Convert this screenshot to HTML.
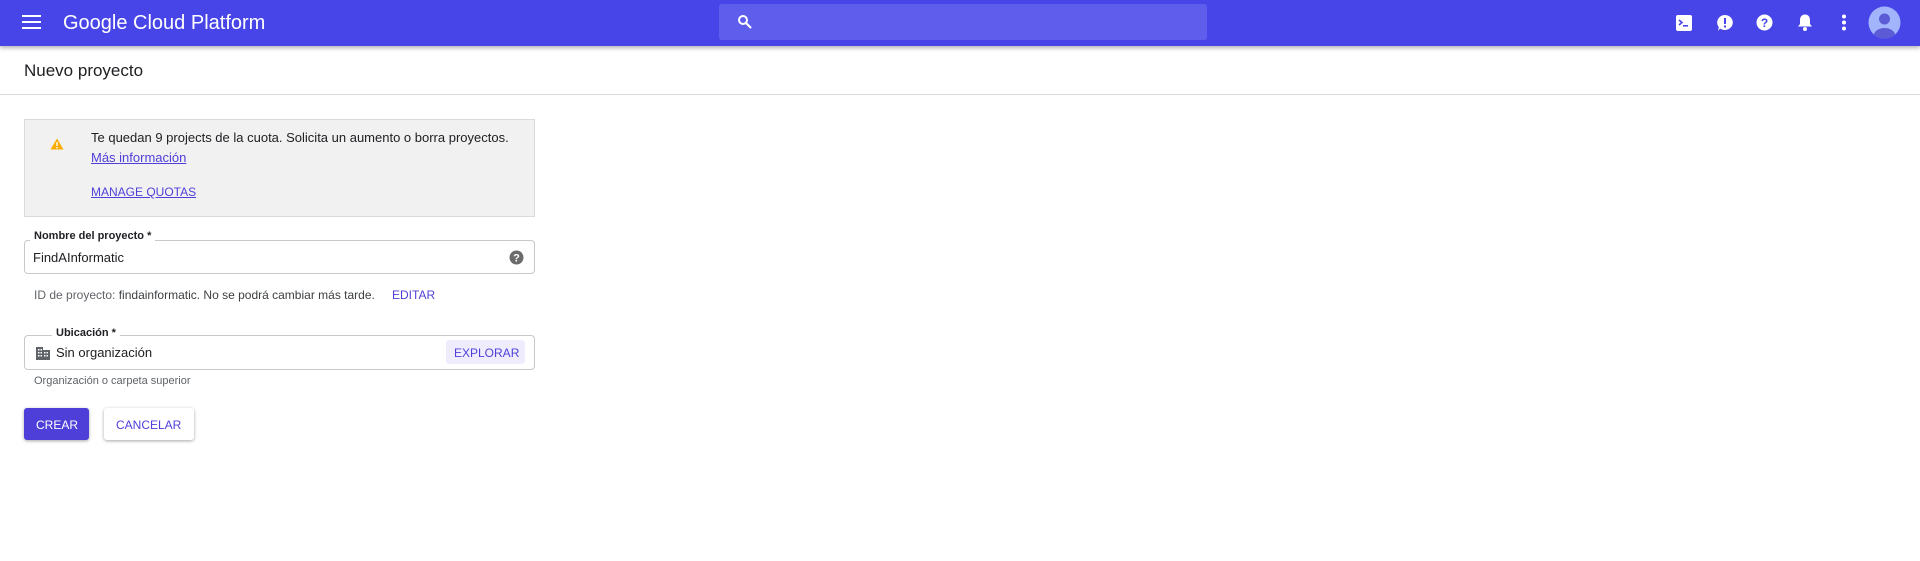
<!DOCTYPE html>
<html><head><meta charset="utf-8"><style>
*{box-sizing:border-box;margin:0;padding:0}
body{width:1920px;height:561px;background:#fff;font-family:"Liberation Sans",Arial,sans-serif;position:relative;overflow:hidden;color:#202124}
.top{position:absolute;left:0;top:0;width:1920px;height:46px;background:#4845e8;box-shadow:0 2px 4px rgba(0,0,0,.3);z-index:2}
.abs{position:absolute}
.search{left:719px;top:4px;width:488px;height:36px;background:#5f5eec;border-radius:3px}
.t{position:absolute;white-space:nowrap;font-size:13px}
.box{left:24px;top:119px;width:511px;height:98px;background:#f1f1f1;border:1px solid #dadada}
.field{border:1px solid #c8c8c8;border-radius:4px;left:24px;width:511px}
.lbl{background:#fff;padding:0 4px;font-size:11px;font-weight:bold;color:#202124}
a{color:#4f3fd9}
</style></head><body>
<div class="top">
 <svg class="abs" style="left:22px;top:14px" width="20" height="16"><rect y="1" width="19" height="2" fill="#fff"/><rect y="7" width="19" height="2" fill="#fff"/><rect y="13" width="19" height="2" fill="#fff"/></svg>
 <div class="t" style="left:63px;top:12px;font-size:20px;color:#fff">Google Cloud Platform</div>
 <div class="abs search"><svg class="abs" style="left:18px;top:10px" width="16" height="16" viewBox="0 0 16 16"><circle cx="6" cy="6" r="4" stroke="#fff" stroke-width="2" fill="none"/><path d="M9 9l5 5" stroke="#fff" stroke-width="2.2"/></svg></div>
 <svg class="abs" style="left:1676px;top:15px" width="16" height="16"><rect width="16" height="16" rx="2" fill="#fff"/><path d="M3 5l3 2.5L3 10" stroke="#4845e8" stroke-width="1.6" fill="none"/><rect x="7" y="10" width="5" height="1.6" fill="#4845e8"/></svg>
 <svg class="abs" style="left:1716px;top:14px" width="18" height="18"><path d="M9 1a8 7.5 0 1 1-5 13.5L2 17l.8-4A8 7.5 0 0 1 9 1z" fill="#fff"/><rect x="8" y="4" width="2" height="6" fill="#4845e8"/><rect x="8" y="11.5" width="2" height="2" fill="#4845e8"/></svg>
 <svg class="abs" style="left:1756px;top:14px" width="17" height="17"><circle cx="8.5" cy="8.5" r="8" fill="#fff"/><text x="8.5" y="13" text-anchor="middle" font-size="12" font-weight="bold" fill="#4845e8" font-family="Liberation Sans">?</text></svg>
 <svg class="abs" style="left:1797px;top:13px" width="16" height="19"><path d="M8 1.5c3 0 5 2.3 5 5.5v4l2 2.5H1l2-2.5v-4c0-3.2 2-5.5 5-5.5z" fill="#fff"/><circle cx="8" cy="16" r="2" fill="#fff"/></svg>
 <svg class="abs" style="left:1842px;top:14px" width="4" height="17"><circle cx="2" cy="2.5" r="2" fill="#fff"/><circle cx="2" cy="8.5" r="2" fill="#fff"/><circle cx="2" cy="14.5" r="2" fill="#fff"/></svg>
 <svg class="abs" style="left:1868px;top:6px" width="33" height="33"><defs><clipPath id="c"><circle cx="16.5" cy="16.5" r="16"/></clipPath></defs><circle cx="16.5" cy="16.5" r="16" fill="#a2b4fb"/><g clip-path="url(#c)" fill="#5c5bd6"><circle cx="16.5" cy="13" r="5.5"/><ellipse cx="16.5" cy="30" rx="11" ry="8"/></g></svg>
</div>
<div class="t" style="left:24px;top:61px;font-size:17px">Nuevo proyecto</div>
<div class="abs" style="left:0;top:94px;width:1920px;height:1px;background:#dadada"></div>
<div class="abs box"></div>
<svg class="abs" style="left:50px;top:138px" width="14" height="12"><path d="M7 0.5L13.5 11.5H.5z" fill="#f9ab00"/><rect x="6.3" y="4" width="1.4" height="4" fill="#fff"/><rect x="6.3" y="9" width="1.4" height="1.4" fill="#fff"/></svg>
<div class="t" style="left:91px;top:130px">Te quedan 9 projects de la cuota. Solicita un aumento o borra proyectos.</div>
<div class="t" style="left:91px;top:150px"><a style="text-decoration:underline">Más información</a></div>
<div class="t" style="left:91px;top:185px;font-size:12px"><a style="text-decoration:underline">MANAGE QUOTAS</a></div>
<div class="abs field" style="top:240px;height:34px"></div>
<div class="t lbl" style="left:30px;top:230px">Nombre del proyecto *</div>
<div class="t" style="left:33px;top:250px">FindAInformatic</div>
<svg class="abs" style="left:509px;top:250px" width="15" height="15"><circle cx="7.5" cy="7.5" r="7" fill="#6b6b6b"/><text x="7.5" y="11.5" text-anchor="middle" font-size="11" font-weight="bold" fill="#fff" font-family="Liberation Sans">?</text></svg>
<div class="t" style="left:34px;top:288px;font-size:12px;color:#5f6368">ID de proyecto: <span style="color:#3c4043">findainformatic. No se podrá cambiar más tarde.</span></div>
<div class="t" style="left:392px;top:288px;font-size:12px;color:#4f3fd9">EDITAR</div>
<div class="abs field" style="top:335px;height:35px"></div>
<div class="t lbl" style="left:52px;top:327px">Ubicación *</div>
<svg class="abs" style="left:36px;top:346px" width="14" height="14"><path d="M0 14V1h7v3h7v10z" fill="#5f6368"/><g fill="#fff"><rect x="2" y="3" width="1.5" height="1.5"/><rect x="4.5" y="3" width="1.5" height="1.5"/><rect x="2" y="6" width="1.5" height="1.5"/><rect x="4.5" y="6" width="1.5" height="1.5"/><rect x="2" y="9" width="1.5" height="1.5"/><rect x="4.5" y="9" width="1.5" height="1.5"/><rect x="8" y="6" width="1.5" height="1.5"/><rect x="10.5" y="6" width="1.5" height="1.5"/><rect x="8" y="9" width="1.5" height="1.5"/><rect x="10.5" y="9" width="1.5" height="1.5"/></g></svg>
<div class="t" style="left:56px;top:345px">Sin organización</div>
<div class="abs" style="left:446px;top:340px;width:79px;height:24px;background:#efedfd;border-radius:3px"></div>
<div class="t" style="left:454px;top:346px;font-size:12px;color:#4f3fd9">EXPLORAR</div>
<div class="t" style="left:34px;top:375px;font-size:11px;color:#5f6368">Organización o carpeta superior</div>
<div class="abs" style="left:24px;top:408px;width:65px;height:32px;background:#4f3fd9;border-radius:3px;box-shadow:0 1px 3px rgba(0,0,0,.35)"></div>
<div class="t" style="left:36px;top:418px;font-size:12px;color:#fff">CREAR</div>
<div class="abs" style="left:104px;top:408px;width:90px;height:32px;background:#fff;border-radius:3px;box-shadow:0 1px 3px rgba(0,0,0,.35)"></div>
<div class="t" style="left:116px;top:418px;font-size:12px;color:#4f3fd9">CANCELAR</div>
</body></html>
